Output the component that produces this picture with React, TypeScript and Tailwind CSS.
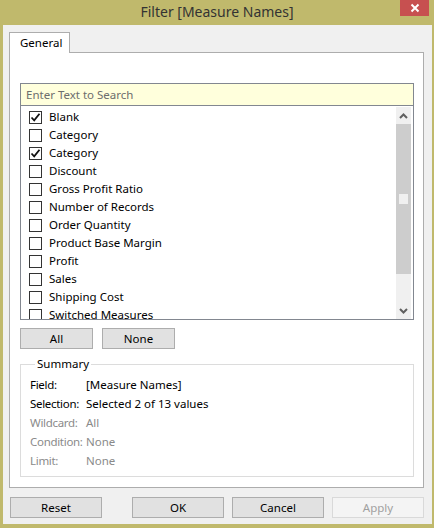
import React from "react";

const items: { label: string; checked: boolean }[] = [
  { label: "Blank", checked: true },
  { label: "Category", checked: false },
  { label: "Category", checked: true },
  { label: "Discount", checked: false },
  { label: "Gross Profit Ratio", checked: false },
  { label: "Number of Records", checked: false },
  { label: "Order Quantity", checked: false },
  { label: "Product Base Margin", checked: false },
  { label: "Profit", checked: false },
  { label: "Sales", checked: false },
  { label: "Shipping Cost", checked: false },
  { label: "Switched Measures", checked: false },
];

const summary: { k: string; v: string; dim: boolean }[] = [
  { k: "Field:", v: "[Measure Names]", dim: false },
  { k: "Selection:", v: "Selected 2 of 13 values", dim: false },
  { k: "Wildcard:", v: "All", dim: true },
  { k: "Condition:", v: "None", dim: true },
  { k: "Limit:", v: "None", dim: true },
];

function Check({ checked }: { checked: boolean }) {
  return (
    <div className="w-[13px] h-[13px] border border-[#333333] bg-white flex items-center justify-center shrink-0">
      {checked && (
        <svg width="11" height="11" viewBox="0 0 11 11">
          <path d="M1.5 5.5 L4.2 8.3 L9.5 1.8" fill="none" stroke="#111" strokeWidth="1.8" />
        </svg>
      )}
    </div>
  );
}

function Btn({ children, w, disabled }: { children: React.ReactNode; w: string; disabled?: boolean }) {
  return (
    <div
      className={
        "h-[21px] flex items-center justify-center text-[11.5px] border " +
        w +
        (disabled
          ? " bg-[#f4f4f4] border-[#d9d9d9] text-[#a0a0a0]"
          : " bg-[#e1e1e1] border-[#adadad] text-black")
      }
    >
      {children}
    </div>
  );
}

export default function App() {
  return (
    <div
      className="w-[434px] h-[528px] bg-[#c0b96c] flex flex-col overflow-hidden"
      style={{ fontFamily: '"Noto Sans", "Open Sans", sans-serif' }}
    >
      <div className="relative h-[25px] shrink-0 flex items-center justify-center">
        <span className="text-[14px] text-[#333333] leading-none mt-[-2px]">Filter [Measure Names]</span>
        <div className="absolute right-[5px] top-0 w-[29px] h-[16px] bg-[#c75050] flex items-center justify-center">
          <svg width="10" height="10" viewBox="0 0 10 10">
            <path d="M1.5 1.5 L8.5 8.5 M8.5 1.5 L1.5 8.5" stroke="#fff" strokeWidth="2" />
          </svg>
        </div>
      </div>
      <div className="flex-1 ml-[3px] mr-[2px] mb-[4px] bg-[#f0f0f0] flex flex-col">
        <div className="pt-[7px] pl-[6px] flex">
          <div className="w-[61px] h-[21px] bg-white border border-b-0 border-[#adadad] text-[11.5px] text-black flex items-center pl-[10px] mb-[-1px] relative z-10">
            General
          </div>
        </div>
        <div className="ml-[6px] mr-[8px] h-[436px] bg-white border border-[#adadad] pt-[30px] pl-[10px] pr-[9px] flex flex-col">
          <div className="h-[23px] border border-[#828790] bg-[#ffffdc] flex items-center pl-[5px] text-[11.5px] text-[#6d6d6d]">
            Enter Text to Search
          </div>
          <div className="h-[214px] border border-t-0 border-[#828790] flex overflow-hidden">
            <div className="flex-1 flex flex-col pt-[2px] overflow-hidden">
              {items.map((it, i) => (
                <div key={i} className="h-[18px] shrink-0 flex items-center pl-[8px] gap-[7px] text-[11.5px] text-black">
                  <Check checked={it.checked} />
                  <span>{it.label}</span>
                </div>
              ))}
            </div>
            <div className="w-[15px] mr-[2px] mt-[1px] mb-0 flex flex-col">
              <div className="h-[17px] bg-[#f0f0f0] flex items-center justify-center">
                <svg width="9" height="6" viewBox="0 0 9 6">
                  <path d="M1 5 L4.5 1.5 L8 5" fill="none" stroke="#606060" strokeWidth="2" />
                </svg>
              </div>
              <div className="h-[150px] bg-[#cdcdcd] flex flex-col items-center">
                <div className="w-[9px] h-[10px] bg-[#f0f0f0] mt-[70px]" />
              </div>
              <div className="flex-1 bg-[#f0f0f0] flex items-end justify-center pb-[5px]">
                <svg width="9" height="6" viewBox="0 0 9 6">
                  <path d="M1 1 L4.5 4.5 L8 1" fill="none" stroke="#606060" strokeWidth="2" />
                </svg>
              </div>
            </div>
          </div>
          <div className="flex gap-[9px] mt-[8px]">
            <Btn w="w-[73px]">All</Btn>
            <Btn w="w-[73px]">None</Btn>
          </div>
          <fieldset className="mt-[8px] border border-[#dcdcdc] pl-[9px] pb-[8px] pt-[4px] h-[120px]">
            <legend className="ml-[5px] px-[2px] text-[11.5px] text-black leading-[14px]">Summary</legend>
            {summary.map((s, i) => (
              <div
                key={i}
                className={"h-[19px] flex items-center text-[11.5px] " + (s.dim ? "text-[#8a8a8a]" : "text-black")}
              >
                <span className="w-[56px] shrink-0 whitespace-nowrap tracking-[-0.3px]">{s.k}</span>
                <span className="whitespace-nowrap">{s.v}</span>
              </div>
            ))}
          </fieldset>
        </div>
        <div className="flex items-center pl-[7px] pr-[8px] mt-[9px]">
          <Btn w="w-[92px]">Reset</Btn>
          <div className="flex-1" />
          <div className="flex gap-[8px]">
            <Btn w="w-[92px]">OK</Btn>
            <Btn w="w-[92px]">Cancel</Btn>
            <Btn w="w-[92px]" disabled>Apply</Btn>
          </div>
        </div>
      </div>
    </div>
  );
}
